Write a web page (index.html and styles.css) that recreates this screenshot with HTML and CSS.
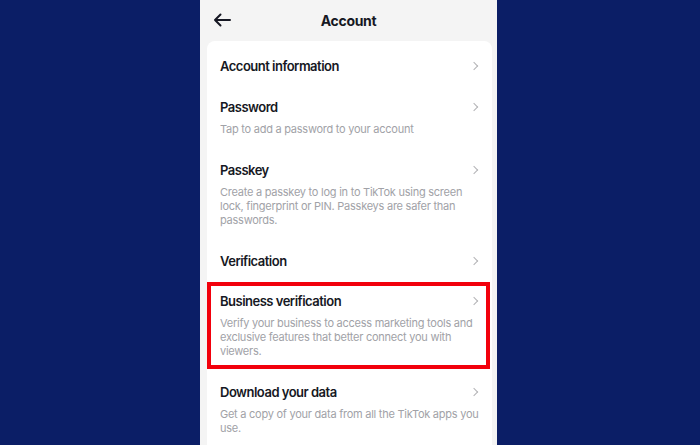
FILE: index.html
```html
<!DOCTYPE html>
<html lang="en">
<head>
    <meta charset="UTF-8">
    <meta name="viewport" content="width=device-width, initial-scale=1.0">
    <title>Account</title>
    <link rel="stylesheet" href="styles.css">
</head>
<body>
    <div class="phone">
        <header class="topbar">
            <button class="back" aria-label="Back">
                <svg width="18" height="14" viewBox="0 0 18 14">
                    <path d="M17 7H2M7.5 1.5L2 7l5.5 5.5" fill="none" stroke="#161823" stroke-width="2" stroke-linecap="round" stroke-linejoin="round"/>
                </svg>
            </button>
            <h1>Account</h1>
        </header>

        <div class="card">
            <div class="row">
                <div class="row-head">
                    <span class="title">Account information</span>
                    <span class="chevron"></span>
                </div>
            </div>
            <div class="row">
                <div class="row-head">
                    <span class="title">Password</span>
                    <span class="chevron"></span>
                </div>
                <p class="desc">Tap to add a password to your account</p>
            </div>
            <div class="row">
                <div class="row-head">
                    <span class="title">Passkey</span>
                    <span class="chevron"></span>
                </div>
                <p class="desc">Create a passkey to log in to TikTok using screen lock, fingerprint or PIN. Passkeys are safer than passwords.</p>
            </div>
            <div class="row">
                <div class="row-head">
                    <span class="title">Verification</span>
                    <span class="chevron"></span>
                </div>
            </div>
            <div class="row marked">
                <div class="row-head">
                    <span class="title">Business verification</span>
                    <span class="chevron"></span>
                </div>
                <p class="desc">Verify your business to access marketing tools and exclusive features that better connect you with viewers.</p>
            </div>
            <div class="row">
                <div class="row-head">
                    <span class="title">Download your data</span>
                    <span class="chevron"></span>
                </div>
                <p class="desc">Get a copy of your data from all the TikTok apps you use.</p>
            </div>
        </div>
    </div>
</body>
</html>
```

FILE: styles.css
```css
/* Page */
body {
    margin: 0;
    height: 445px;
    overflow: hidden;
    background-color: #0b1e66;
    font-family: 'Inter', 'Liberation Sans', sans-serif;
    color: #161823;
    display: flex;
    justify-content: center;
}

.phone {
    width: 297px;
    margin-right: 3px;
    background: #f4f4f4;
    display: flex;
    flex-direction: column;
}

/* Top bar */
.topbar {
    position: relative;
    flex-shrink: 0;
    height: 41px;
    display: flex;
    align-items: center;
    justify-content: center;
}

.topbar h1 {
    margin: 0;
    font-size: 14px;
    font-weight: 700;
    line-height: 18px;
    letter-spacing: -0.3px;
}

.back {
    position: absolute;
    left: 13px;
    top: 13px;
    padding: 0;
    border: none;
    background: none;
    display: flex;
}

/* Settings list */
.card {
    flex: 1 0 auto;
    margin: 0 5px 0 7px;
    padding-top: 4px;
    background: #ffffff;
    border-radius: 8px 8px 0 0;
}

.row {
    position: relative;
    padding: 12px 13px 10.5px 13px;
}

.row-head {
    display: flex;
    align-items: center;
    justify-content: space-between;
}

.title {
    font-size: 13px;
    font-weight: 600;
    line-height: 18px;
    letter-spacing: -0.5px;
}

.chevron {
    width: 5px;
    height: 5px;
    margin-right: 2px;
    border-top: 1.3px solid #b3b3b6;
    border-right: 1.3px solid #b3b3b6;
    transform: rotate(45deg);
}

.desc {
    margin: 6px 0 2.5px 0;
    font-size: 11px;
    line-height: 14px;
    letter-spacing: -0.25px;
    color: #a1a2a7;
}

/* Highlight frame around a row */
.marked::after {
    content: "";
    position: absolute;
    top: 2px;
    left: 0;
    right: 2px;
    bottom: 2px;
    border: 4px solid #f2000c;
}
```
